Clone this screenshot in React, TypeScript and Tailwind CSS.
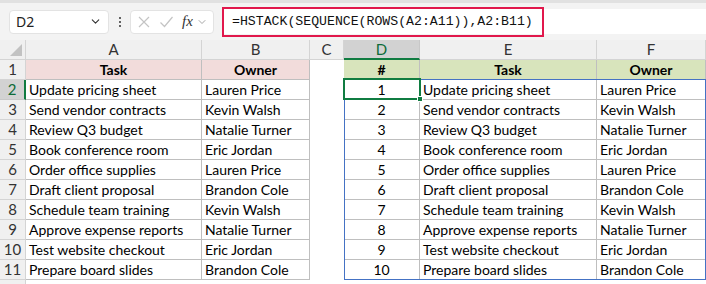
import { ChevronDown } from 'lucide-react';

const cols = ['A', 'B', 'C', 'D', 'E', 'F'];

const tasks = [
  ['Update pricing sheet', 'Lauren Price'],
  ['Send vendor contracts', 'Kevin Walsh'],
  ['Review Q3 budget', 'Natalie Turner'],
  ['Book conference room', 'Eric Jordan'],
  ['Order office supplies', 'Lauren Price'],
  ['Draft client proposal', 'Brandon Cole'],
  ['Schedule team training', 'Kevin Walsh'],
  ['Approve expense reports', 'Natalie Turner'],
  ['Test website checkout', 'Eric Jordan'],
  ['Prepare board slides', 'Brandon Cole'],
];

const cell = 'h-[20px] border-r border-b border-[#bfbfbf] px-[3px] leading-[19px] whitespace-nowrap overflow-hidden';
const hdr = 'bg-[#f0f0f0] border-r border-b border-[#d4d4d4] text-[#333] text-center text-[15px] leading-[19px]';

function FormulaBar() {
  return (
    <div className="h-[40px] bg-[#f3f3f3] border-t-[3px] border-[#e1e1e1] flex items-center pl-[9px]">
      <div className="w-[100px] h-[24px] bg-white rounded-[4px] border border-[#e3e3e3] flex items-center justify-between px-[6px] text-[14px] text-[#222]" style={{ fontFamily: '"Noto Sans", sans-serif' }}>
        <span>D2</span>
        <ChevronDown size={13} strokeWidth={2} className="text-[#333]" />
      </div>
      <div className="w-[21px] flex flex-col items-center gap-[2px]">
        <span className="w-[2px] h-[2px] bg-[#333] rounded-full" />
        <span className="w-[2px] h-[2px] bg-[#333] rounded-full" />
        <span className="w-[2px] h-[2px] bg-[#333] rounded-full" />
      </div>
      <div className="w-[84px] h-[24px] bg-white rounded-[4px] border border-[#e3e3e3] flex items-center pl-[6px] pr-[5px]">
        <svg width="14" height="14" viewBox="0 0 14 14" className="mr-[8px]">
          <path d="M2 2 L12 12 M12 2 L2 12" stroke="#c4c4c4" strokeWidth="1.2" fill="none" />
        </svg>
        <svg width="15" height="14" viewBox="0 0 15 14" className="mr-[8px]">
          <path d="M1.5 7.5 L5.5 11.5 L13.5 2" stroke="#c4c4c4" strokeWidth="1.2" fill="none" />
        </svg>
        <span className="text-[15px] italic text-[#333] leading-none" style={{ fontFamily: '"Liberation Serif", serif' }}>fx</span>
        <ChevronDown size={12} strokeWidth={1.5} className="text-[#888] ml-[3px]" />
      </div>
      <div className="flex-1 ml-[8px] h-[25px] bg-white rounded-l-[4px] flex items-center">
        <div className="w-[322px] h-[30px] border-2 border-[#e1184c] flex items-center pl-[8px] text-[13.2px] text-[#111]" style={{ fontFamily: '"Liberation Mono", monospace' }}>
          =HSTACK(SEQUENCE(ROWS(A2:A11)),A2:B11)
        </div>
      </div>
    </div>
  );
}

function Row({ n, task, owner }: { n: number; task: string; owner: string }) {
  const active = n === 2;
  return (
    <>
      <div
        className={
          active
            ? 'bg-[#d2d2d2] border-r-2 border-r-[#107c41] border-b border-[#c8c8c8] text-center text-[15px] leading-[19px] text-[#0e6b38]'
            : hdr
        }
      >
        {n}
      </div>
      <div className={cell}>{task}</div>
      <div className={cell}>{owner}</div>
      <div className="h-[20px]" />
      <div className={`${cell} text-center`}>{n - 1}</div>
      <div className={cell}>{task}</div>
      <div className={cell}>{owner}</div>
    </>
  );
}

export default function App() {
  return (
    <div className="w-[706px] h-[284px] overflow-hidden bg-white text-black" style={{ fontFamily: 'Lato, "Liberation Sans", sans-serif' }}>
      <FormulaBar />
      <div className="relative">
        <div className="grid grid-cols-[26px_176px_108px_34px_76px_177px_109px] auto-rows-[20px] text-[14px]">
          {/* column headers */}
          <div className="bg-[#f0f0f0] border-r border-b border-[#d4d4d4] relative">
            <svg width="12" height="12" viewBox="0 0 12 12" className="absolute right-[3px] bottom-[3px]">
              <path d="M12 0 L12 12 L0 12 Z" fill="#c2c2c2" />
            </svg>
          </div>
          {cols.map((c) => (
            <div
              key={c}
              className={
                c === 'D'
                  ? 'bg-[#d2d2d2] border-r border-[#c8c8c8] border-b-2 border-b-[#107c41] text-[#0e6b38] text-center text-[15px] leading-[19px]'
                  : hdr
              }
            >
              {c}
            </div>
          ))}

          {/* row 1 */}
          <div className={hdr}>1</div>
          <div className={`${cell} bg-[#f2dcdb] font-bold text-center`}>Task</div>
          <div className={`${cell} bg-[#f2dcdb] font-bold text-center`}>Owner</div>
          <div className="h-[20px]" />
          <div className={`${cell} bg-[#d8e4bc] font-bold text-center`}>#</div>
          <div className={`${cell} bg-[#d8e4bc] font-bold text-center`}>Task</div>
          <div className={`${cell} bg-[#d8e4bc] font-bold text-center`}>Owner</div>

          {tasks.map(([task, owner], i) => (
            <Row key={i} n={i + 2} task={task} owner={owner} />
          ))}

          {/* row 12 stub */}
          <div className="bg-[#f0f0f0] border-r border-[#d4d4d4]" />
          <div className="col-span-6" />
        </div>

        {/* spill range outline */}
        <div className="absolute left-[344px] top-[39px] w-[362px] h-[201px] border border-[#4472c4] pointer-events-none" />
        {/* active cell */}
        <div className="absolute left-[343px] top-[38px] w-[78px] h-[22px] border-2 border-[#107c41] pointer-events-none">
          <span className="absolute -right-[4px] -bottom-[4px] w-[6px] h-[6px] bg-[#107c41] border border-white" />
        </div>
      </div>
    </div>
  );
}
